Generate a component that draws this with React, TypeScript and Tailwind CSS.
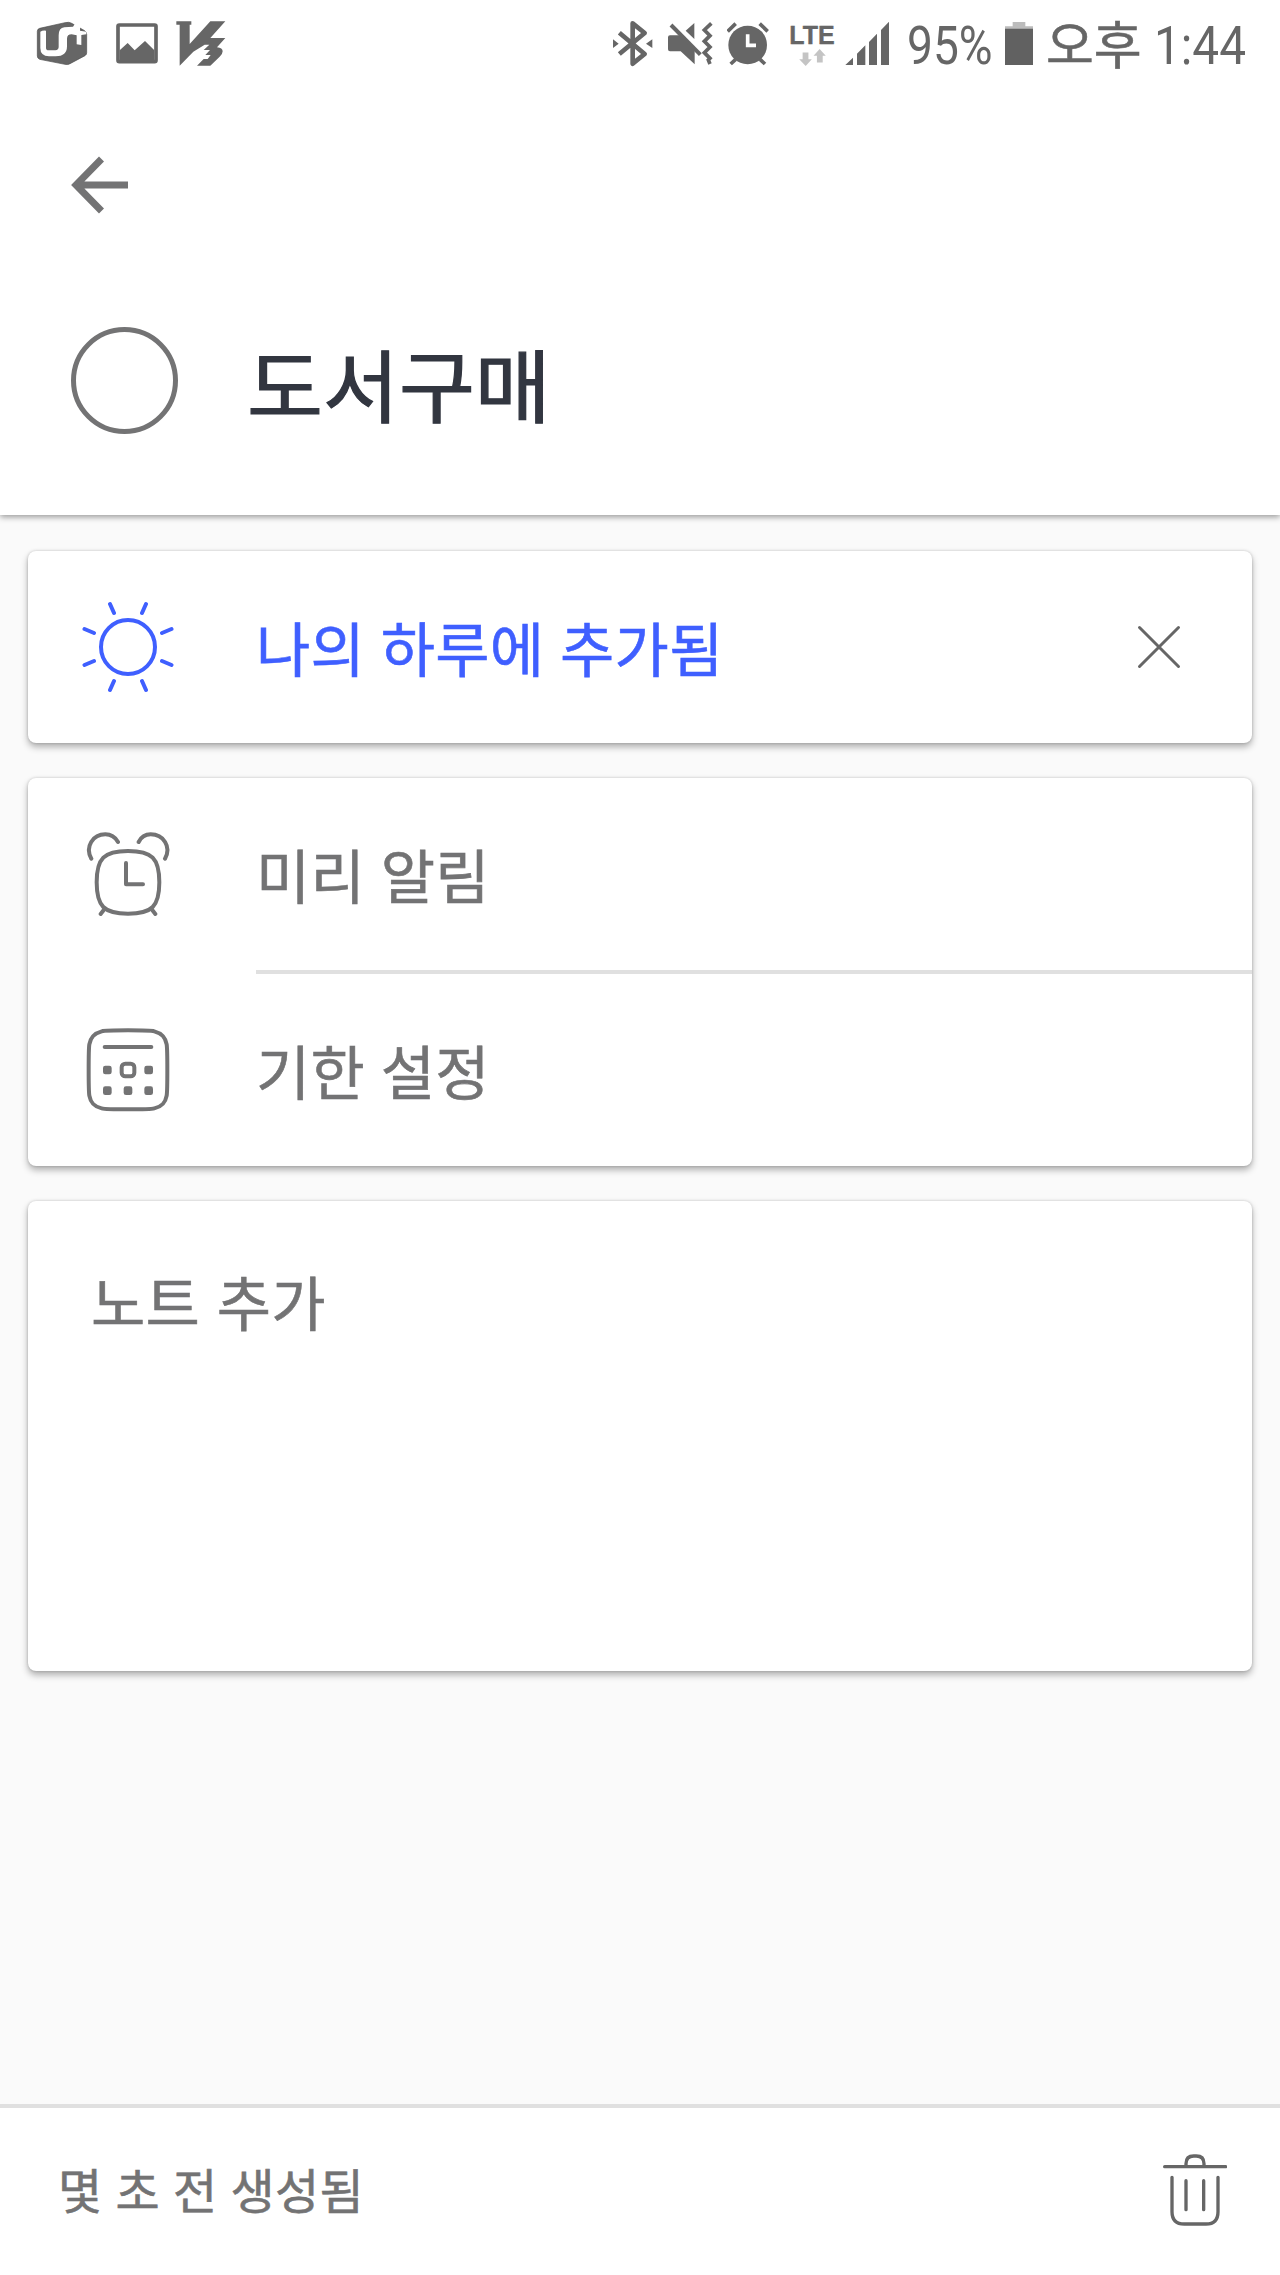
import * as React from 'react'

// Status bar icons share a 90px tall box, drawn at three units per pixel.

function CarrierIcon() {
    return (
        <svg className="w-[52px] h-[90px] shrink-0" viewBox="49 0 156 270">
            <path d="M53 94q0-7 7-9l76-17q12-3 20 2l39 22q6 4 6 11v55q0 6-5 9l-45 24q-7 4-15 2l-76-15q-7-3-7-10z" fill="#666" stroke="#4d4d4d" strokeWidth="2" />
            <path d="M62 95q6-4 17-3v52q0 7 8 7h20q10-1 10-10v-35q0-22 17-24l26-2 9-14 12 12v14l19 3v8l-15 2v30l-14-2v-27l-15-3q-14 0-14 13v23q0 30-34 30H88q-26-1-26-25z" fill="#fff" />
        </svg>
    )
}

function PictureIcon() {
    return (
        <svg className="w-[42px] h-[90px] shrink-0" viewBox="288 0 126 270">
            <rect x="294" y="75" width="114" height="110" rx="4" fill="#fff" stroke="#666" strokeWidth="11" />
            <path d="M299 151l24-22 21 22 31-28 28 28v34H299z" fill="#666" />
        </svg>
    )
}

function VaccineIcon() {
    return (
        <svg className="w-[50px] h-[90px] shrink-0" viewBox="468 0 150 270">
            <path d="M469 64h45v10h-5v58l62-68h45l-45 50h45l-25 28q17 2 17 12 0 8-9 16l-28 27h-40l20-20h12l9-12h-16l14-15h-19l17-16h-14l-34 21-41 42V74h-10z" fill="#666" />
        </svg>
    )
}

function BluetoothIcon() {
    return (
        <svg className="w-[41px] h-[90px] shrink-0" viewBox="36 0 123 270">
            <path d="M58 98l76 64-36 29V70l36 29-76 63" fill="none" stroke="#666" strokeWidth="14" strokeLinejoin="round" />
            <path d="M39 118l17 13-17 13zM157 118l-19 13 19 13z" fill="#666" />
        </svg>
    )
}

function MuteIcon() {
    return (
        <svg className="w-[45px] h-[90px] shrink-0" viewBox="203 0 135 270">
            <path d="M203 112q0-6 6-6h36l38 38v49l-42-39h-32q-6 0-6-6zM282 69v48l-26-25z" fill="#666" />
            <path d="M214 67l94 92" stroke="#fff" strokeWidth="8" />
            <path d="M212 75l88 89" stroke="#666" strokeWidth="12" />
            <path d="M333 70l-21 20 17 17-17 17 17 17-17 17 17 17-5 5 5 12" fill="none" stroke="#666" strokeWidth="11" />
        </svg>
    )
}

function AlarmStatusIcon() {
    return (
        <svg className="w-[42px] h-[90px] shrink-0" viewBox="382 0 126 270">
            <circle cx="444" cy="135" r="58" fill="#666" />
            <path d="M384 94l24-23M480 71l24 23M408 178l-15 14M481 178l15 14" stroke="#666" strokeWidth="11" />
            <path d="M444 103v33h25" fill="none" stroke="#fff" strokeWidth="11" />
        </svg>
    )
}

function DataArrowsIcon() {
    return (
        <svg className="w-[27px] h-[17px]" viewBox="597 146 78 50" fill="#c4c4c4">
            <path d="M607 156h17v20h10l-18 20-19-20h10zM657 146l18 20h-9v20h-17v-20h-10z" />
        </svg>
    )
}

function SignalIcon() {
    return (
        <svg className="w-[45px] h-[90px] shrink-0" viewBox="735 0 135 270" fill="#666">
            <path d="M736 195l23-22v22zM771 195v-34l25-25v59zM807 195v-69l24-25v94zM843 195V90l24-25v130z" />
        </svg>
    )
}

function BatteryIcon() {
    return (
        <svg className="w-[28px] h-[90px] shrink-0" viewBox="344 0 84 270">
            <path d="M367 66h38v13h23v8h-84v-8h23z" fill="#bcbcbc" />
            <path d="M344 86h84v109h-84z" fill="#616161" />
        </svg>
    )
}

function BackIcon() {
    return (
        <svg className="w-[57px] h-[58px]" viewBox="0 0 57 58" fill="none" stroke="#737374" strokeWidth="7">
            <path d="M30.500 3L5 29l25.500 26M6 29h51" />
        </svg>
    )
}

function SunIcon() {
    return (
        <svg className="w-[92px] h-[92px]" viewBox="0 0 92 92" fill="none" stroke="#3f5fff" strokeWidth="4" strokeLinecap="round">
            <circle cx="46" cy="46" r="27" />
            <path d="M28 3l4 9M64 3l-4 9M28 89l4-9M64 89l-4-9M2.500 28l9.500 4M89.500 28L80 32M2.500 64l9.500-4M89.500 64L80 60" />
        </svg>
    )
}

function CloseIcon() {
    return (
        <svg className="w-[44px] h-[44px]" viewBox="0 0 44 44" stroke="#666" strokeWidth="3" strokeLinecap="round">
            <path d="M2.500 2.500l39 39M41.500 2.500l-39 39" />
        </svg>
    )
}

function AlarmIcon() {
    return (
        <svg className="w-[84px] h-[84px]" viewBox="78 67 252 252" fill="none" stroke="#737374" strokeWidth="12" strokeLinecap="round" strokeLinejoin="round">
            <path d="M204 124c72 0 94 22 94 94s-22 94-94 94-94-22-94-94 22-94 94-94z" />
            <path d="M94 147c-20-36 5-73 42-73 16 0 30 9 38 23M315 147c20-36-5-73-43-73-16 0-29 9-36 23" />
            <path d="M198 160v64h51M133 299l-11 14M275 299l11 14" />
        </svg>
    )
}

function CalendarIcon() {
    return (
        <svg className="w-[84px] h-[84px]" viewBox="78 654 252 252" fill="none" stroke="#737374" strokeWidth="12" strokeLinecap="round">
            <path d="M204 661c46 0 68 0 79 3 23 6 33 17 37 39 2 12 2 32 2 77s0 65-2 77c-4 22-14 33-37 38-11 3-33 3-79 3s-68 0-79-3c-23-5-33-16-37-38-2-12-2-32-2-77s0-65 2-77c4-22 14-33 37-39 11-3 33-3 79-3z" />
            <path d="M134 711h140" />
            <rect x="185" y="761" width="38" height="38" rx="11" />
            <g fill="#737374" stroke="none">
                <rect x="129" y="767" width="26" height="26" rx="7" />
                <rect x="253" y="767" width="26" height="26" rx="7" />
                <rect x="129" y="829" width="26" height="26" rx="7" />
                <rect x="191" y="829" width="26" height="26" rx="7" />
                <rect x="253" y="829" width="26" height="26" rx="7" />
            </g>
        </svg>
    )
}

function TrashIcon() {
    return (
        <svg className="w-[64px] h-[72px]" viewBox="188 221 192 216" fill="none" stroke="#666" strokeWidth="10" strokeLinecap="round">
            <path d="M193 259h183M257 257v-7q0-23 23-23h8q23 0 23 23v7" />
            <path d="M215 291v103q0 37 37 37h65q36 0 36-37V291M257 301v87M310 301v87" />
        </svg>
    )
}

function StatusBar() {
    return (
        <div className="flex h-[90px] pl-[36px] pr-[36px] text-[#666]">
            <CarrierIcon />
            <div className="ml-[28px] flex"><PictureIcon /></div>
            <div className="ml-[18px] flex"><VaccineIcon /></div>
            <div className="ml-auto flex">
                <BluetoothIcon />
                <div className="ml-[15px] flex"><MuteIcon /></div>
                <div className="ml-[14px] flex"><AlarmStatusIcon /></div>
                <div className="ml-[20px] w-[46px] flex flex-col items-center pt-[21px]">
                    <span className="font-['Liberation_Sans',sans-serif] font-bold text-[25px] leading-[28px] [-webkit-text-stroke:0.4px]">LTE</span>
                    <DataArrowsIcon />
                </div>
                <div className="ml-[10px] flex"><SignalIcon /></div>
                <div className="ml-[17px] w-[87px] font-[Roboto,sans-serif] text-[53px] leading-[92px] whitespace-nowrap">
                    <span className="inline-block origin-left scale-x-[0.87]">95%</span>
                </div>
                <div className="ml-[11px] flex"><BatteryIcon /></div>
                <div className="ml-[13px] w-[94px] text-[51px] leading-[84px] whitespace-nowrap [-webkit-text-stroke:0.6px]">
                    <span className="inline-block origin-left scale-x-[1.02]">오후</span>
                </div>
                <div className="ml-[14px] w-[90px] font-[Roboto,sans-serif] text-[53px] leading-[92px] whitespace-nowrap">
                    <span className="inline-block origin-left scale-x-[0.9]">1:44</span>
                </div>
            </div>
        </div>
    )
}

interface DetailRowProps {
    icon: React.ReactNode
    label: string
    active?: boolean
    action?: React.ReactNode
}

function DetailRow({ icon, label, active, action }: DetailRowProps) {
    return (
        <div className="h-[192px] flex items-center">
            <div className="w-[200px] flex justify-center shrink-0">{icon}</div>
            <span className={`ml-[28px] pb-px text-[59px] leading-[84px] tracking-[0.3px] [word-spacing:2px] [-webkit-text-stroke:0.6px] ${active ? 'text-[#3f5fff]' : 'text-[#737374]'}`}>
                {label}
            </span>
            {action && <div className="ml-auto mr-[71px]">{action}</div>}
        </div>
    )
}

function Card({ className, children }: { className?: string; children: React.ReactNode }) {
    return (
        <section className={`bg-white rounded-[8px] shadow-[0_4px_7px_rgba(0,0,0,0.3),0_0_3px_rgba(0,0,0,0.18)] ${className ?? ''}`}>
            {children}
        </section>
    )
}

export default function App() {
    return (
        <div className="w-[1280px] h-[2275px] flex flex-col overflow-hidden bg-[#fafafa] font-['Noto_Sans_CJK_KR',sans-serif]">
            <header className="h-[515px] shrink-0 bg-white shadow-[0_2px_6px_rgba(0,0,0,0.4)]">
                <StatusBar />
                <div className="pl-[71px] pt-[66px] h-[237px]">
                    <BackIcon />
                </div>
                <div className="flex pl-[71px]">
                    <div className="size-[107px] rounded-full border-[5px] border-[#737374]" />
                    <h1 className="ml-[69px] origin-left scale-x-[1.045] text-[79px] leading-[111px] text-[#323640] [-webkit-text-stroke:1.2px]">도서구매</h1>
                </div>
            </header>

            <main className="flex-1 flex flex-col gap-[35px] px-[28px] pt-[36px]">
                <Card>
                    <DetailRow icon={<SunIcon />} label="나의 하루에 추가됨" active action={<CloseIcon />} />
                </Card>

                <Card>
                    <DetailRow icon={<AlarmIcon />} label="미리 알림" />
                    <div className="ml-[228px] h-[4px] bg-[#e0e0e0]" />
                    <DetailRow icon={<CalendarIcon />} label="기한 설정" />
                </Card>

                <Card className="h-[470px] pl-[63px] pt-[58px]">
                    <p className="text-[59px] leading-[84px] tracking-[0.3px] [word-spacing:3px] text-[#737374] [-webkit-text-stroke:0.6px]">노트 추가</p>
                </Card>
            </main>

            <footer className="h-[171px] shrink-0 flex items-center justify-between border-t-4 border-[#e0e0e0] bg-white pl-[58px] pr-[53px] pb-[4px]">
                <span className="pb-[4px] text-[48px] leading-[70px] tracking-[0.3px] [word-spacing:2px] text-[#737374] [-webkit-text-stroke:0.6px]">몇 초 전 생성됨</span>
                <TrashIcon />
            </footer>
        </div>
    )
}
